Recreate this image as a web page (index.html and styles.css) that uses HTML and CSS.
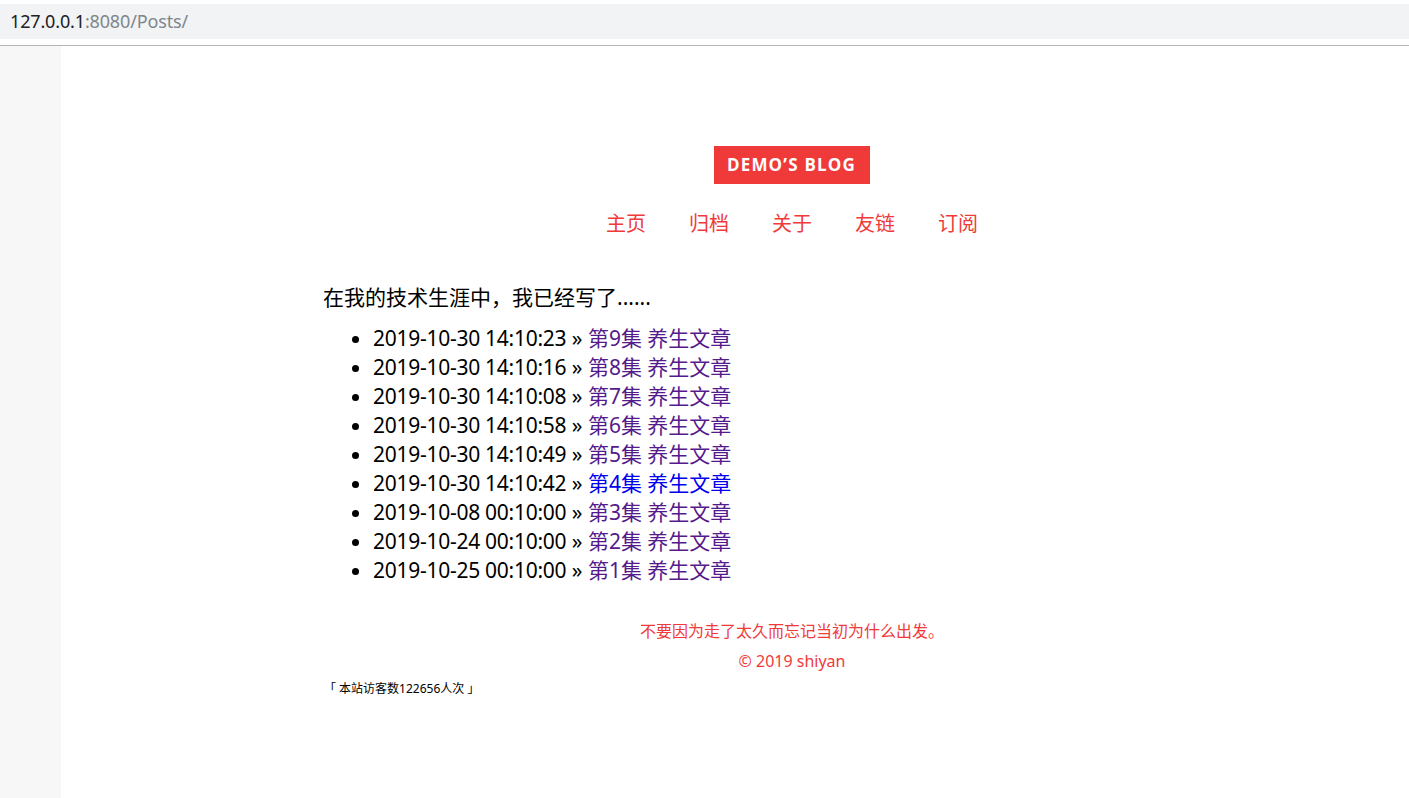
FILE: index.html
```html
<!DOCTYPE html>
<html lang="zh-CN">
<head>
<meta charset="utf-8">
<title>Posts</title>
<link rel="stylesheet" href="styles.css">
</head>
<body>
<div class="urlbar-wrap">
  <div class="urlbar"><span class="host">127.0.0.1</span><span class="path">:8080/Posts/</span></div>
</div>
<div class="frame">
  <aside class="side"></aside>
  <main class="main">
    <div class="container">
      <header class="header">
        <a class="logo" href="#">DEMO’S BLOG</a>
        <nav class="nav">
          <a href="#">主页</a>
          <a href="#">归档</a>
          <a href="#">关于</a>
          <a href="#">友链</a>
          <a href="#">订阅</a>
        </nav>
      </header>
      <section class="posts">
        <p class="intro">在我的技术生涯中，我已经写了......</p>
        <ul class="post-list">
          <li><span class="date">2019-10-30 14:10:23</span> » <a class="visited" href="#">第9集 养生文章</a></li>
          <li><span class="date">2019-10-30 14:10:16</span> » <a class="visited" href="#">第8集 养生文章</a></li>
          <li><span class="date">2019-10-30 14:10:08</span> » <a class="visited" href="#">第7集 养生文章</a></li>
          <li><span class="date">2019-10-30 14:10:58</span> » <a class="visited" href="#">第6集 养生文章</a></li>
          <li><span class="date">2019-10-30 14:10:49</span> » <a class="visited" href="#">第5集 养生文章</a></li>
          <li><span class="date">2019-10-30 14:10:42</span> » <a class="fresh" href="#">第4集 养生文章</a></li>
          <li><span class="date">2019-10-08 00:10:00</span> » <a class="visited" href="#">第3集 养生文章</a></li>
          <li><span class="date">2019-10-24 00:10:00</span> » <a class="visited" href="#">第2集 养生文章</a></li>
          <li><span class="date">2019-10-25 00:10:00</span> » <a class="visited" href="#">第1集 养生文章</a></li>
        </ul>
      </section>
      <footer class="footer">
        <p class="motto">不要因为走了太久而忘记当初为什么出发。</p>
        <p class="copy">© 2019 shiyan</p>
      </footer>
      <p class="counter">「 本站访客数122656人次 」</p>
    </div>
  </main>
</div>
</body>
</html>
```
FILE: styles.css
```css
* { box-sizing: border-box; }
html, body {
  margin: 0;
  padding: 0;
  height: 100%;
  background: #fff;
  font-family: "Noto Sans", "Noto Sans CJK SC", sans-serif;
  color: #000;
}
body {
  display: flex;
  flex-direction: column;
  overflow: hidden;
}
.urlbar-wrap {
  padding-top: 4px;
  height: 46px;
  border-bottom: 1px solid #b4b4b4;
  flex: none;
}
.urlbar {
  height: 35px;
  background: #f1f3f4;
  padding-left: 10px;
  font-size: 18px;
  line-height: 35px;
  letter-spacing: -0.15px;
}
.urlbar .host { color: #202124; }
.urlbar .path { color: #80868b; }
.frame {
  flex: 1;
  display: flex;
}
.side {
  width: 61px;
  background: #f7f7f7;
  flex: none;
}
.main {
  flex: 1;
  padding-left: 262px;
}
.container {
  width: 938px;
}
.header {
  display: flex;
  flex-direction: column;
  align-items: center;
  padding-top: 100px;
}
.logo {
  display: block;
  background: #f03a3a;
  color: #fff;
  text-decoration: none;
  font-family: "Open Sans", sans-serif;
  font-weight: 700;
  font-size: 17px;
  letter-spacing: 1.2px;
  height: 38px;
  line-height: 38px;
  padding: 0 14px 0 13px;
}
.nav {
  display: flex;
  gap: 43px;
  margin-top: 25px;
}
.nav a {
  color: #f03a3a;
  text-decoration: none;
  font-size: 20px;
  line-height: 30px;
}
.posts {
  margin-top: 43px;
}
.intro {
  margin: 0;
  font-size: 21px;
  line-height: 30px;
}
.post-list {
  margin: 12px 0 0;
  padding-left: 50px;
  font-size: 21px;
  line-height: 29px;
}
.post-list .date { letter-spacing: -0.27px; }
.post-list a { text-decoration: none; }
.post-list a.visited { color: #551a8b; }
.post-list a.fresh { color: #0000ee; }
.footer {
  margin-top: 31px;
  text-align: center;
  color: #f03a3a;
  font-size: 16px;
}
.footer p {
  margin: 0;
  line-height: 30px;
}
.counter {
  margin: 1px 0 0;
  padding-left: 1px;
  font-size: 12px;
  line-height: 24px;
}
```
